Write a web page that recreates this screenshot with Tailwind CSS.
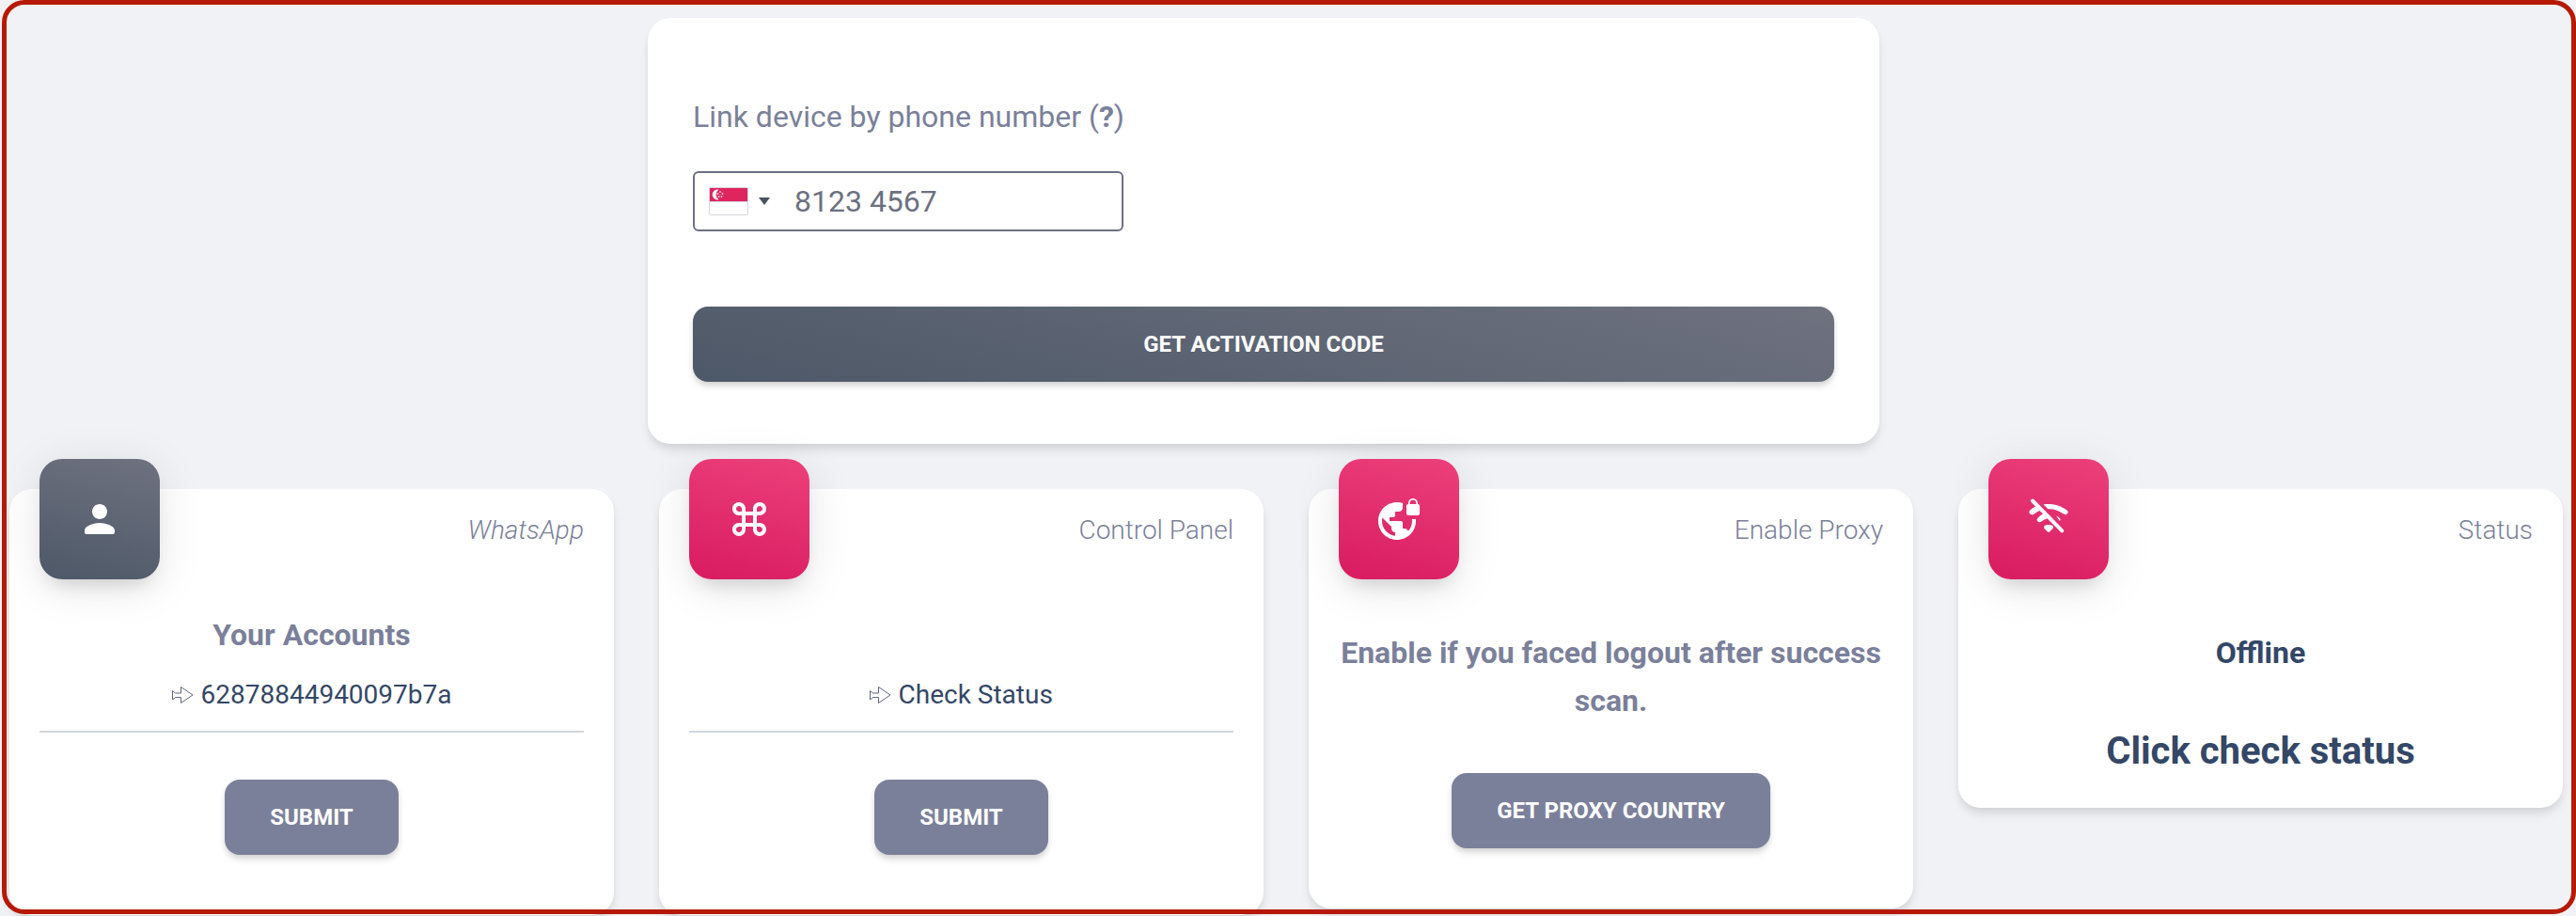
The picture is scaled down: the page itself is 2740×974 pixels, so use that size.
<!DOCTYPE html>
<html lang="en">
<head>
    <meta charset="UTF-8">
    <meta name="viewport" content="width=device-width, initial-scale=1.0">
    <title>Link device</title>
    <script src="https://cdn.jsdelivr.net/npm/@tailwindcss/browser@4"></script>
</head>
<body class="h-screen overflow-hidden bg-[#f0f2f5] font-[Roboto,'DejaVu_Sans',sans-serif] text-[#7b809a]">

    <main class="pt-[19px] pl-[10px] pr-[14px]">

        <!-- Link by phone number -->
        <form class="ml-[25%] w-[calc(50%-48px)] bg-white rounded-3xl shadow-[0_8px_12px_-2px_rgba(0,0,0,0.1),0_4px_8px_-2px_rgba(0,0,0,0.06)] px-12 pt-20 pb-[66px]">
            <label for="phone" class="block text-[32px] leading-[51px]">Link device by phone number (<b>?</b>)</label>
            <div class="mt-8 flex items-center w-[458px] h-16 border-2 border-[#6c7080] rounded-md">
                <button type="button" aria-label="Country" class="flex items-center h-full pl-[15px] pr-2 gap-[11px]">
                    <svg class="w-[42px] h-[30px]" viewBox="0 0 42 30">
                        <rect x=".5" y=".5" width="41" height="29" rx="1" fill="#fff" stroke="#d4d5da"/>
                        <path d="M1 1h40v14H1z" fill="#e0245e"/>
                        <path d="M1 15.500h40" stroke="#d4d5da"/>
                        <path d="M10.500 2.800a5.400 5.400 0 1 0 0 10.400a6.200 6.200 0 0 1 0-10.400z" fill="#fff"/>
                        <g fill="#fff" fill-opacity=".8">
                            <circle cx="12" cy="5" r="1"/>
                            <circle cx="9.500" cy="7" r="1"/>
                            <circle cx="14.500" cy="7" r="1"/>
                            <circle cx="10.500" cy="10" r="1"/>
                            <circle cx="13.500" cy="10" r="1"/>
                        </g>
                    </svg>
                    <svg class="w-3 h-2" viewBox="0 0 12 8"><path d="M0 0h12L6 8z" fill="#495361"/></svg>
                </button>
                <input id="phone" type="tel" placeholder="8123 4567" class="flex-1 min-w-0 h-full pl-[18px] text-[32px] outline-none placeholder:text-[#6c7080]">
            </div>
            <button type="button" class="mt-20 w-full h-20 rounded-2xl bg-[linear-gradient(195deg,#6f727f,#4d5868)] shadow-[0_6px_8px_-2px_rgba(0,0,0,0.14),0_2px_6px_rgba(0,0,0,0.08)] text-white text-2xl font-bold uppercase">Get activation code</button>
        </form>

        <div class="mt-12 grid grid-cols-4 gap-12 items-start">

            <!-- Accounts -->
            <section class="bg-white rounded-3xl shadow-[0_8px_12px_-2px_rgba(0,0,0,0.1),0_4px_8px_-2px_rgba(0,0,0,0.06)] px-8 pb-16">
                <div class="flex justify-between">
                    <div class="-mt-8 size-32 rounded-3xl flex items-center justify-center bg-[linear-gradient(195deg,#6f727f,#4d5868)] shadow-[0_8px_48px_rgba(0,0,0,0.1),0_14px_20px_-10px_rgba(64,64,64,0.2)]">
                        <svg class="size-12" viewBox="0 0 24 24" fill="#fff"><path d="M12 12c2.210 0 4-1.790 4-4s-1.790-4-4-4-4 1.790-4 4 1.790 4 4 4zm0 2c-2.670 0-8 1.340-8 4v1c0 .55.45 1 1 1h14c.55 0 1-.45 1-1v-1c0-2.660-5.330-4-8-4z"/></svg>
                    </div>
                    <p class="pt-6 text-[28px] leading-10 font-light italic">WhatsApp</p>
                </div>
                <form class="pt-[34px] text-center">
                    <label for="account" class="block text-[32px] leading-[51px] font-bold">Your Accounts</label>
                    <div class="flex items-center justify-center gap-2 h-[78px] border-b-2 border-[#d2d6da]">
                        <svg class="w-[23px] h-[18px]" viewBox="0 0 23 18" fill="none" stroke="#5f6780"><path d="M.5 4.500L3.500 7H9.500V.5L22 9L9.500 17.500V11.500H3.500L.5 14z"/></svg>
                        <select id="account" class="appearance-none text-[28px] text-[#344767]">
                            <option>62878844940097b7a</option>
                        </select>
                    </div>
                    <button type="button" class="mt-[50px] h-20 px-12 rounded-2xl bg-[#7b809a] shadow-[0_6px_8px_-2px_rgba(0,0,0,0.14),0_2px_6px_rgba(0,0,0,0.08)] text-white text-2xl font-bold uppercase">Submit</button>
                </form>
            </section>

            <!-- Control panel -->
            <section class="bg-white rounded-3xl shadow-[0_8px_12px_-2px_rgba(0,0,0,0.1),0_4px_8px_-2px_rgba(0,0,0,0.06)] px-8 pb-16">
                <div class="flex justify-between">
                    <div class="-mt-8 size-32 rounded-3xl flex items-center justify-center bg-[linear-gradient(195deg,#ec407a,#d81b60)] shadow-[0_8px_48px_rgba(0,0,0,0.1),0_14px_20px_-10px_rgba(64,64,64,0.2)]">
                        <svg class="size-12" viewBox="0 0 24 24" fill="#fff"><path d="M17.500 3C15.570 3 14 4.570 14 6.500V8h-4V6.500C10 4.570 8.430 3 6.500 3S3 4.570 3 6.500 4.570 10 6.500 10H8v4H6.500C4.570 14 3 15.570 3 17.500S4.570 21 6.500 21s3.500-1.570 3.500-3.500V16h4v1.500c0 1.930 1.570 3.500 3.500 3.500s3.500-1.570 3.500-3.500-1.570-3.500-3.500-3.500H16v-4h1.500c1.930 0 3.500-1.570 3.500-3.500S19.430 3 17.500 3zM16 8V6.500c0-.83.67-1.500 1.500-1.500s1.500.67 1.500 1.500S18.330 8 17.500 8H16zM6.500 8C5.670 8 5 7.330 5 6.500S5.670 5 6.500 5 8 5.670 8 6.500V8H6.500zm3.500 6v-4h4v4h-4zm7.500 5c-.83 0-1.500-.67-1.500-1.500V16h1.500c.83 0 1.500.67 1.500 1.500s-.67 1.500-1.500 1.500zm-11 0c-.83 0-1.500-.67-1.500-1.500S5.670 16 6.500 16H8v1.500c0 .83-.67 1.500-1.500 1.500z"/></svg>
                    </div>
                    <label for="action" class="pt-6 text-[28px] leading-10 font-light">Control Panel</label>
                </div>
                <form class="pt-[85px] text-center">
                    <div class="flex items-center justify-center gap-2 h-[78px] border-b-2 border-[#d2d6da]">
                        <svg class="w-[23px] h-[18px]" viewBox="0 0 23 18" fill="none" stroke="#5f6780"><path d="M.5 4.500L3.500 7H9.500V.5L22 9L9.500 17.500V11.500H3.500L.5 14z"/></svg>
                        <select id="action" class="appearance-none text-[28px] text-[#344767]">
                            <option>Check Status</option>
                        </select>
                    </div>
                    <button type="button" class="mt-[50px] h-20 px-12 rounded-2xl bg-[#7b809a] shadow-[0_6px_8px_-2px_rgba(0,0,0,0.14),0_2px_6px_rgba(0,0,0,0.08)] text-white text-2xl font-bold uppercase">Submit</button>
                </form>
            </section>

            <!-- Proxy -->
            <section class="bg-white rounded-3xl shadow-[0_8px_12px_-2px_rgba(0,0,0,0.1),0_4px_8px_-2px_rgba(0,0,0,0.06)] px-8 pb-16">
                <div class="flex justify-between">
                    <div class="-mt-8 size-32 rounded-3xl flex items-center justify-center bg-[linear-gradient(195deg,#ec407a,#d81b60)] shadow-[0_8px_48px_rgba(0,0,0,0.1),0_14px_20px_-10px_rgba(64,64,64,0.2)]">
                        <svg class="size-12" viewBox="0 0 24 24" fill="#fff"><path d="M22 4v-.5C22 2.120 20.880 1 19.500 1S17 2.120 17 3.500V4c-.55 0-1 .45-1 1v4c0 .55.45 1 1 1h5c.55 0 1-.45 1-1V5c0-.55-.45-1-1-1zm-.8 0h-3.400v-.5c0-.94.76-1.700 1.700-1.700s1.700.76 1.700 1.700V4zm-2.280 8c.04.33.08.66.08 1 0 2.080-.8 3.970-2.100 5.390-.26-.81-1-1.390-1.900-1.390h-1v-3c0-.55-.45-1-1-1H7v-2h2c.55 0 1-.45 1-1V8h2c1.100 0 2-.9 2-2V3.460c-.95-.3-1.950-.46-3-.46C5.480 3 1 7.480 1 13s4.480 10 10 10 10-4.480 10-10c0-.34-.02-.67-.05-1h-2.030zM10 20.930c-3.950-.49-7-3.850-7-7.930 0-.62.08-1.210.21-1.790L8 16v1c0 1.100.9 2 2 2v1.930z"/></svg>
                    </div>
                    <p class="pt-6 text-[28px] leading-10 font-light">Enable Proxy</p>
                </div>
                <div class="pt-[53px] text-center">
                    <p class="text-[32px] leading-[51px] font-bold">Enable if you faced logout after success scan.</p>
                    <button type="button" class="mt-[51px] h-20 px-12 rounded-2xl bg-[#7b809a] shadow-[0_6px_8px_-2px_rgba(0,0,0,0.14),0_2px_6px_rgba(0,0,0,0.08)] text-white text-2xl font-bold uppercase">Get proxy country</button>
                </div>
            </section>

            <!-- Status -->
            <section class="bg-white rounded-3xl shadow-[0_8px_12px_-2px_rgba(0,0,0,0.1),0_4px_8px_-2px_rgba(0,0,0,0.06)] px-8 pb-7">
                <div class="flex justify-between">
                    <div class="-mt-8 size-32 rounded-3xl flex items-center justify-center bg-[linear-gradient(195deg,#ec407a,#d81b60)] shadow-[0_8px_48px_rgba(0,0,0,0.1),0_14px_20px_-10px_rgba(64,64,64,0.2)]">
                        <svg class="size-12" viewBox="0 0 48 48" fill="#fff">
                            <path d="M7 4.500L38.300 36.300" stroke="#fff" stroke-width="4" stroke-linecap="round"/>
                            <path d="M18.500 8.500C28 7 37 9.500 44 15Q45.500 16.500 44 18.200Q42 20 39.500 18.300C34 14.300 29 13 23.500 13.300z"/>
                            <path d="M10 10.500L14.500 15Q11 16.500 8 19Q6 20 4 18.200Q2.500 16.500 4 14.800Q6.500 12.500 10 10.500z"/>
                            <path d="M18 18.500L23 23.300Q19.500 24 16.500 26.500Q14 28 12.200 26.200Q10.800 24.500 12.500 22.700Q15 20 18 18.500z"/>
                            <path d="M32 20.500Q34.500 21.500 36 23.300Q37 24.500 36 26z"/>
                            <path d="M19.500 31Q24 29 28.500 31Q29.500 32.500 28.500 34L25 37.500Q24 38.200 23 37.500L19.500 34Q18.500 32.500 19.500 31z"/>
                        </svg>
                    </div>
                    <p class="pt-6 text-[28px] leading-10 font-light">Status</p>
                </div>
                <div class="pt-[53px] text-center text-[#344767] font-bold">
                    <h5 class="text-[32px] leading-[51px]">Offline</h5>
                    <h4 class="mt-[47px] text-[40px] leading-16">Click check status</h4>
                </div>
            </section>
        </div>
    </main>

    <!-- Red outline over the whole view -->
    <div class="pointer-events-none fixed top-0 right-0 bottom-[2px] left-[2px] border-5 border-[#b71900] rounded-3xl"></div>

</body>
</html>
